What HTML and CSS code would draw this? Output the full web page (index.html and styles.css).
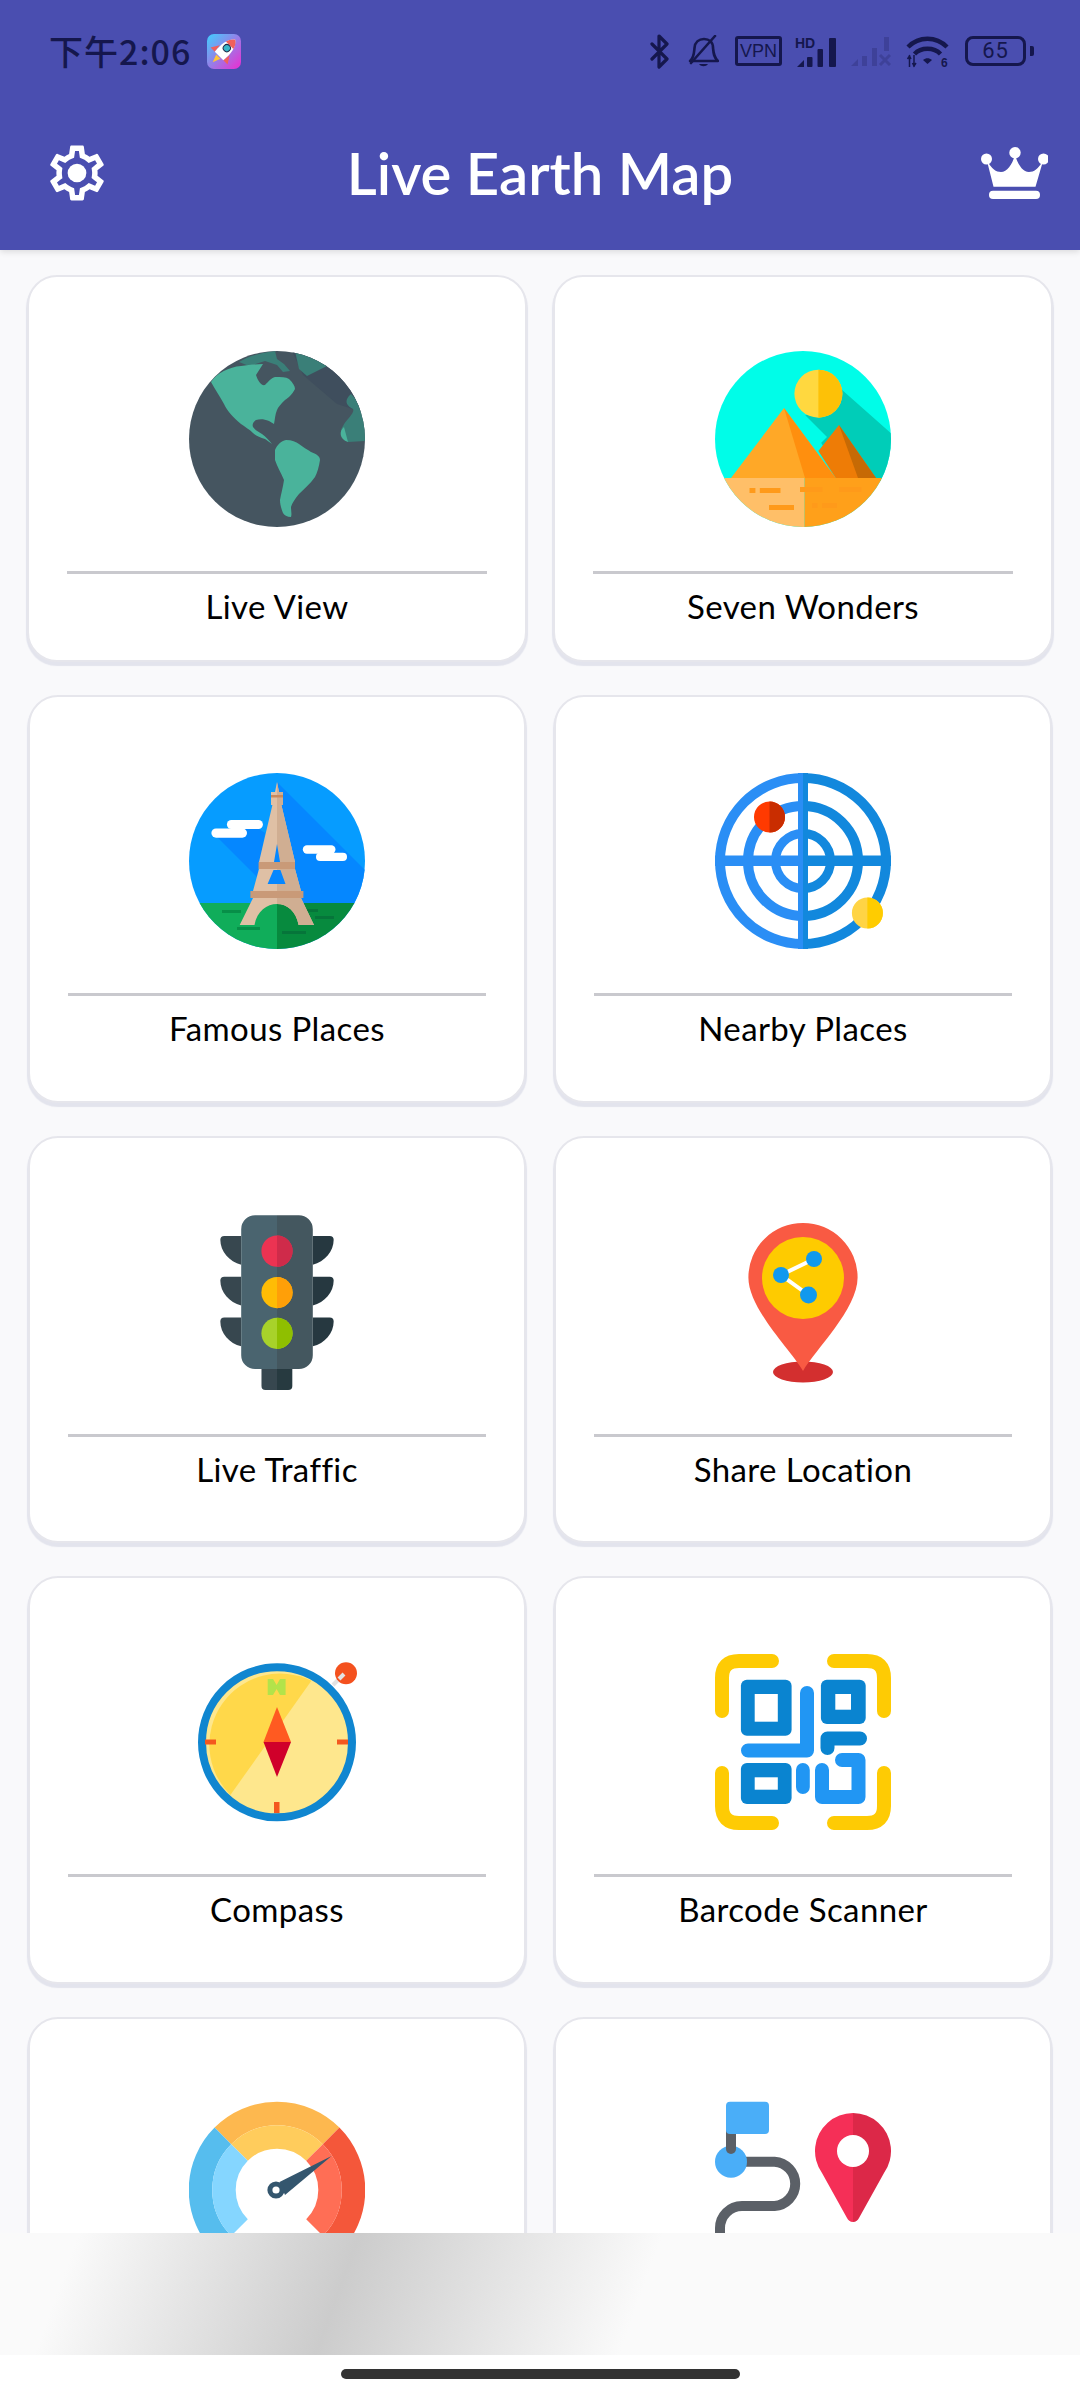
FILE: index.html
```html
<!DOCTYPE html>
<html lang="en">
<head>
  <meta charset="UTF-8">
  <title>Live Earth Map</title>
  <link rel="stylesheet" href="styles.css">
</head>
<body>

  <header class="app-header">
    <div class="status-bar">
      <div class="status-left">
        <span class="status-time">下午2:06</span>
        <svg class="rocket-icon" viewBox="0 0 34 35">
          <defs>
            <linearGradient id="rocketBg" x1="0" y1="0" x2="1" y2="1">
              <stop offset="0" stop-color="#3fd0ff"/>
              <stop offset="1" stop-color="#ee2bd0"/>
            </linearGradient>
          </defs>
          <rect width="34" height="35" rx="7" fill="url(#rocketBg)"/>
          <g transform="rotate(45 17 17)">
            <path d="M10 16 L5 24 H11 Z M24 16 L29 24 H23 Z" fill="#f0605c"/>
            <path d="M17 1 C23 6 24 14 23 24 H11 C10 14 11 6 17 1Z" fill="#fff"/>
            <path d="M17 1 C20 3 21.500 6 22.300 9 H11.700 C12.500 6 14 3 17 1Z" fill="#f0605c"/>
            <circle cx="17" cy="13" r="3.600" fill="#38b6c8" stroke="#1e2a4a" stroke-width="1"/>
            <path d="M14 25 H20 L17 33 Z" fill="#ffc53a"/>
          </g>
        </svg>
      </div>
      <div class="status-right">
        <svg class="ic-bt" viewBox="0 0 21 35">
          <path d="M3 10 L18 25 L10 33 V2 L18 10 L3 25" fill="none" stroke="#15174d" stroke-width="3.200" stroke-linejoin="round" stroke-linecap="round"/>
        </svg>
        <svg class="ic-bell" viewBox="0 0 31 32">
          <path d="M2 26 C6 23 6 18 6.500 13 C7 7 11 4 16 4 C21 4 25 7 25 13 C25.500 18 26 23 30 26 Z" fill="none" stroke="#15174d" stroke-width="2.600" stroke-linejoin="round"/>
          <path d="M11 29 H20 C18 32 13 32 11 29Z" fill="#15174d"/>
          <path d="M3 28 L27 1" stroke="#15174d" stroke-width="2.600" stroke-linecap="round"/>
        </svg>
        <span class="ic-vpn">VPN</span>
        <svg class="ic-signal" viewBox="0 0 42 31">
          <text class="ic-hd" x="0" y="12">HD</text>
          <path d="M2 31 L9 24 V31Z" fill="#15174d"/>
          <rect x="12" y="21" width="5.500" height="10" rx="1" fill="#15174d"/>
          <rect x="22.500" y="13" width="5.500" height="18" rx="1" fill="#15174d"/>
          <rect x="34" y="2" width="7" height="29" rx="1" fill="#15174d"/>
        </svg>
        <svg class="ic-signal-off" viewBox="0 0 41 29">
          <path d="M1 29 L8 22 V29Z M12 19 H17 V29 H12Z M22 11 H27 V29 H22Z M34 0 H39 V14 H34Z" fill="#15174d"/>
          <path d="M30 18 L40 28 M40 18 L30 28" stroke="#15174d" stroke-width="3"/>
        </svg>
        <svg class="ic-wifi" viewBox="0 0 43 34">
          <path d="M2 13 C13 2 30 2 41 13" fill="none" stroke="#15174d" stroke-width="4.400"/>
          <path d="M8.500 20 C15 13 28 13 34.500 20" fill="none" stroke="#15174d" stroke-width="4.400"/>
          <path d="M17 26 C20 23.500 23 23.500 26 26 L21.500 30Z" fill="#15174d"/>
          <path d="M3.500 21 V33 M8 21 V33 M1.500 25 L3.500 22 L5 25 M6.500 29 L8 32 L10 29" fill="none" stroke="#15174d" stroke-width="1.500"/>
          <text class="ic-six" x="35" y="33">6</text>
        </svg>
        <div class="battery"><span>65</span></div>
      </div>
    </div>
    <div class="toolbar">
      <svg class="ic-gear" viewBox="0 0 24 24">
        <path fill="#fff" d="M19.430 12.980c.04-.32.07-.64.07-.98 0-.34-.03-.66-.07-.98l2.110-1.650c.19-.15.24-.42.12-.64l-2-3.460c-.09-.16-.26-.25-.44-.25-.06 0-.12.01-.17.03l-2.490 1c-.52-.4-1.080-.73-1.690-.98l-.38-2.650C14.460 2.180 14.250 2 14 2h-4c-.25 0-.46.18-.49.42l-.38 2.650c-.61.25-1.170.59-1.690.98l-2.490-1c-.06-.02-.12-.03-.18-.03-.17 0-.34.09-.43.25l-2 3.460c-.13.22-.07.49.12.64l2.110 1.650c-.04.32-.07.65-.07.98 0 .33.03.66.07.98l-2.110 1.650c-.19.15-.24.42-.12.64l2 3.460c.09.16.26.25.44.25.06 0 .12-.01.17-.03l2.490-1c.52.4 1.080.73 1.690.98l.38 2.650c.03.24.24.42.49.42h4c.25 0 .46-.18.49-.42l.38-2.650c.61-.25 1.170-.59 1.690-.98l2.490 1c.06.02.12.03.18.03.17 0 .34-.09.43-.25l2-3.460c.12-.22.07-.49-.12-.64l-2.110-1.650zm-1.980-1.710c.04.31.05.52.05.73 0 .21-.02.43-.05.73l-.14 1.130.89.7 1.080.84-.7 1.210-1.270-.51-1.040-.42-.9.68c-.43.32-.84.56-1.250.73l-1.060.43-.16 1.130-.2 1.350h-1.400l-.19-1.350-.16-1.130-1.060-.43c-.43-.18-.83-.41-1.230-.71l-.91-.7-1.060.43-1.270.51-.7-1.210 1.080-.84.89-.7-.14-1.130c-.03-.31-.05-.54-.05-.74s.02-.43.05-.73l.14-1.130-.89-.7-1.080-.84.7-1.210 1.270.51 1.040.42.9-.68c.43-.32.84-.56 1.250-.73l1.060-.43.16-1.130.2-1.350h1.390l.19 1.350.16 1.130 1.060.43c.43.18.83.41 1.230.71l.91.7 1.060-.43 1.270-.51.7 1.210-1.070.85-.89.7.14 1.130z"/>
        <circle cx="12" cy="12" r="3.400" fill="#fff"/>
      </svg>
      <h1 class="app-title">Live Earth Map</h1>
      <svg class="ic-crown" viewBox="0 0 68 52">
        <circle cx="6.500" cy="12" r="5.500" fill="#fff"/>
        <circle cx="35" cy="5.700" r="5.700" fill="#fff"/>
        <circle cx="63.500" cy="12" r="5.500" fill="#fff"/>
        <path d="M7 14 L13.500 39.700 H55.500 L63 14 C58 22 54 25 49 25 C43 25 38 18 35 8 C32 18 27 25 21 25 C16 25 12 22 7 14Z" fill="#fff"/>
        <rect x="9" y="43.700" width="51" height="8.300" rx="4" fill="#fff"/>
      </svg>
    </div>
  </header>

  <main class="menu-area">
    <div class="menu-grid">

      <div class="card card-wide">
        <svg class="card-icon" viewBox="0 0 176 176">
          <defs><clipPath id="earthClip"><circle cx="88" cy="88" r="88"/></clipPath></defs>
          <g clip-path="url(#earthClip)">
            <rect width="176" height="176" fill="#455560"/>
            <path d="M103 0 L114 24 L148 53 L176 62 V0Z" fill="#3f4e5d"/>
            <path d="M176 100 C170 130 160 150 140 170 L176 176Z" fill="#3f4e5a"/>
            <path d="M50 11 C58 6 66 3 86 0 L88 8 L95 13 L101 20 L94 21 L88 14 L76 10 L60 15 Z" fill="#3a7f78"/>
            <path d="M106 0 L140 14 L118 25 L110 18Z" fill="#3a7f78"/>
            <path d="M162 43 L178 60 V90 L159 91 C153 88 150 80 154 75 C158 68 166 62 164 58 C158 55 154 50 162 43Z" fill="#3a7f78"/>
            <path d="M155 76 C150 80 150 88 159 91 Z" fill="#4ab39b"/>
            <path d="M22 31 C28 22 40 16 52 15 C60 14 68 13 74 13 L67 24 C69 30 72 35 76 34 C79 31 82 27 86 26 C92 26 97 26 100 28 C104 32 106 35 106 38 C103 44 99 47 96 49 C92 53 89 56 88 59 C86 64 86 68 85 73 L80 70 C75 68 71 68 67 69 C64 71 63 74 64 76 C67 80 70 81 73 83 C77 86 80 89 83 93 C80 91 78 89 76 88 C71 86 67 85 64 82 C60 78 56 76 52 73 C44 66 38 60 35 53 C31 46 26 38 22 31Z" fill="#4ab39b"/>
            <path d="M86 99 C88 94 92 90 97 89 C103 89 107 91 110 93 C114 96 119 99 122 101 C127 103 131 105 131 109 C130 116 128 122 126 126 C121 133 115 138 110 143 C106 148 103 152 102 156 C102 160 103 163 102 166 C98 166 95 164 94 162 C92 157 91 153 91 149 C92 143 94 136 95 129 C92 122 88 115 86 109Z" fill="#4ab39b"/>
          </g>
        </svg>
        <div class="card-line"></div>
        <div class="card-label">Live View</div>
      </div>

      <div class="card card-wide">
        <svg class="card-icon" viewBox="0 0 176 176">
          <defs><clipPath id="pyrClip"><circle cx="88" cy="88" r="88"/></clipPath></defs>
          <g clip-path="url(#pyrClip)">
            <rect width="176" height="176" fill="#00fde8"/>
            <path d="M126 38 L178 84 V130 H140 L108 95 L90 64 L110 62Z" fill="#00cdb8"/>
            <path d="M88 62 L112 86 L102 96 L76 68Z" fill="#00fde8"/>
            <path d="M69 57 L16 127 H120.700Z" fill="#ffa827"/>
            <path d="M69 57 L90 127 H120.700Z" fill="#ff8f0e"/>
            <path d="M124 74 L103.400 100 L120.700 127 H161Z" fill="#ee7c06"/>
            <path d="M124 74 L143 127 H161Z" fill="#c66a05"/>
            <rect y="127" width="89.600" height="49" fill="#ffbf68"/>
            <rect x="89.600" y="127" width="87" height="49" fill="#ffa01a"/>
            <path d="M34.500 137 H40.400 V142 H34.500Z M44.800 137 H65.500 V142 H44.800Z M85 136 H107.600 V141 H85Z M124 136 H146.500 V141 H124Z M54 154 H79 V159 H54Z M97 152 H102.400 V157 H97Z M107 152 H122 V157 H107Z" fill="#ff9a1a"/>
          </g>
          <circle cx="103.400" cy="42.700" r="24" fill="#ffd83f"/>
          <path d="M103.400 18.700 a24 24 0 0 1 0 48z" fill="#fdc107"/>
        </svg>
        <div class="card-line"></div>
        <div class="card-label">Seven Wonders</div>
      </div>

      <div class="card">
        <svg class="card-icon" viewBox="0 0 176 176">
          <defs><clipPath id="eiffelClip"><circle cx="88" cy="88" r="88"/></clipPath></defs>
          <g clip-path="url(#eiffelClip)">
            <rect width="176" height="176" fill="#069cff"/>
            <path d="M88 9 L176 97 V131 H88Z" fill="#0587ff"/>
            <path d="M28 64 L68 104 L76 60 L58 48Z" fill="#0587ff"/>
            <rect y="130" width="88" height="46" fill="#10ad5a"/>
            <rect x="88" y="130" width="88" height="46" fill="#078a3e"/>
            <path d="M33 137 H52 V140 H33Z M48 154 H71 V157 H48Z" fill="#078f48"/>
            <path d="M93 158 H117 V161 H93Z M126 143 H145 V146 H126Z M117 136 H129 V139 H117Z" fill="#06753a"/>
          </g>
          <rect x="37.900" y="47" width="36" height="9" rx="4.500" fill="#fff"/>
          <rect x="22.400" y="55.500" width="35.600" height="9.200" rx="4.600" fill="#fff"/>
          <rect x="113.800" y="72.300" width="32.700" height="8.500" rx="4.200" fill="#fff"/>
          <rect x="127" y="79.700" width="31" height="8.300" rx="4.100" fill="#fff"/>
          <path d="M88 9 L90 19 H94 V32 H92.400 L106 89 V96 L112 118 V125 L125 152 H109.600 C107 138 98 131 88 131 C78 131 68 138 65.500 152 H50.700 L64 125 V118 L70 96 V89 L83.400 32 H82 V19 H86Z" fill="#dfc0a5"/>
          <path d="M88 9 L90 19 H94 V32 H92.400 L106 89 V96 L112 118 V125 L125 152 H109.600 C107 138 98 131 88 131Z" fill="#d0ae92"/>
          <path d="M88 71 L85 89 H91Z M84.500 97 H91.400 L96.500 111 H78.600Z" fill="#0587ff"/>
          <rect x="69.600" y="89" width="36.400" height="7" fill="#c99a78"/>
          <rect x="61.400" y="118" width="53" height="7" fill="#c99a78"/>
          <rect x="82" y="22" width="12" height="2.500" fill="#c9895c"/>
        </svg>
        <div class="card-line"></div>
        <div class="card-label">Famous Places</div>
      </div>

      <div class="card">
        <svg class="card-icon" viewBox="0 0 176 176">
          <defs>
            <linearGradient id="radarSplit" gradientUnits="userSpaceOnUse" x1="0" y1="0" x2="176" y2="0">
              <stop offset="0.500" stop-color="#2a8ef5"/>
              <stop offset="0.500" stop-color="#1288dd"/>
            </linearGradient>
          </defs>
          <g fill="none" stroke="url(#radarSplit)">
            <circle cx="88" cy="88" r="83" stroke-width="10"/>
            <circle cx="88" cy="88" r="55" stroke-width="10"/>
            <circle cx="88" cy="88" r="27.500" stroke-width="9"/>
          </g>
          <rect x="83" y="0" width="5" height="176" fill="#2a8ef5"/>
          <rect x="88" y="0" width="5" height="176" fill="#1288dd"/>
          <rect x="0" y="82.500" width="88" height="10.500" fill="#2a8ef5"/>
          <rect x="88" y="82.500" width="88" height="10.500" fill="#1288dd"/>
          <circle cx="54.500" cy="44" r="15.500" fill="#ff3a00"/>
          <path d="M54.500 28.500 a15.500 15.500 0 0 1 0 31z" fill="#c92d00"/>
          <circle cx="152.400" cy="140" r="15.500" fill="#ffd445"/>
          <path d="M152.400 124.500 a15.500 15.500 0 0 1 0 31z" fill="#ffcc00"/>
        </svg>
        <div class="card-line"></div>
        <div class="card-label">Nearby Places</div>
      </div>

      <div class="card">
        <svg class="card-icon" viewBox="0 0 176 177">
          <path d="M52 22 H35 a4 4 0 0 0-4 4 C31 38 40 48 52 51Z M52 63 H35 a4 4 0 0 0-4 4 C31 79 40 89 52 92Z M52 104 H35 a4 4 0 0 0-4 4 C31 120 40 130 52 133Z" fill="#37474f"/>
          <path d="M124 22 H141 a4 4 0 0 1 4 4 C145 38 136 48 124 51Z M124 63 H141 a4 4 0 0 1 4 4 C145 79 136 89 124 92Z M124 104 H141 a4 4 0 0 1 4 4 C145 120 136 130 124 133Z" fill="#263840"/>
          <path d="M72.400 150 H88 V177 H76.400 a4 4 0 0 1-4-4Z" fill="#37474f"/>
          <path d="M88 150 H103.400 V173 a4 4 0 0 1-4 4 H88Z" fill="#273a40"/>
          <path d="M88 1.300 H66 a14 14 0 0 0-14 14 V142 a14 14 0 0 0 14 14 H88Z" fill="#4a646f"/>
          <path d="M88 1.300 H110 a14 14 0 0 1 14 14 V142 a14 14 0 0 1-14 14 H88Z" fill="#44575f"/>
          <circle cx="88" cy="37.300" r="15.700" fill="#ec3352"/>
          <path d="M88 21.600 a15.700 15.700 0 0 1 0 31.400z" fill="#cf2b4a"/>
          <circle cx="88" cy="79" r="15.700" fill="#ffbc05"/>
          <path d="M88 63.300 a15.700 15.700 0 0 1 0 31.400z" fill="#ff9f08"/>
          <circle cx="88" cy="120" r="15.700" fill="#a8d22a"/>
          <path d="M88 104.300 a15.700 15.700 0 0 1 0 31.400z" fill="#8fbf00"/>
        </svg>
        <div class="card-line"></div>
        <div class="card-label">Live Traffic</div>
      </div>

      <div class="card">
        <svg class="card-icon" viewBox="0 0 176 176">
          <ellipse cx="88" cy="158" rx="30" ry="10.500" fill="#d32f2f"/>
          <path d="M88 157 C76 136 33.400 95 33.400 63.500 A54.600 54.600 0 0 1 142.600 63.500 C142.600 95 100 136 88 157Z" fill="#f95a43"/>
          <circle cx="88" cy="64" r="41" fill="#fecb00"/>
          <path d="M99 45 L66 61 L93.500 81" fill="none" stroke="#fff" stroke-width="4"/>
          <circle cx="66" cy="61" r="8" fill="#1199ee"/>
          <circle cx="99" cy="45" r="8" fill="#1199ee"/>
          <circle cx="93.500" cy="81" r="8.500" fill="#1199ee"/>
        </svg>
        <div class="card-line"></div>
        <div class="card-label">Share Location</div>
      </div>

      <div class="card">
        <svg class="card-icon" viewBox="0 0 176 176">
          <path d="M144 31 L155 20" stroke="#e3e3e3" stroke-width="4"/>
          <circle cx="157" cy="19.300" r="11" fill="#f4511e"/>
          <path d="M150 25 L155 20" stroke="#e3e3e3" stroke-width="4"/>
          <circle cx="88" cy="88.300" r="73" fill="#fee78d"/>
          <path d="M122.400 26.700 A71 71 0 0 0 41.400 141 Z" fill="#ffd84a"/>
          <circle cx="88" cy="88.300" r="75" fill="none" stroke="#1086d0" stroke-width="8"/>
          <rect x="78.700" y="25" width="17.900" height="16" fill="#b3e34a"/>
          <path d="M84 25 L87.600 31 L91 25Z M84 41 L87.600 35 L91 41Z" fill="#ffd84a"/>
          <path d="M16 85.500 H27 V90.500 H16Z M148 85.500 H159 V90.500 H148Z M85 148 H90.500 V159 H85Z" fill="#f4581f"/>
          <path d="M88 53 L74.500 88 H102Z" fill="#ff5a21"/>
          <path d="M88 123 L74.500 88 H102Z" fill="#d0002a"/>
        </svg>
        <div class="card-line"></div>
        <div class="card-label">Compass</div>
      </div>

      <div class="card">
        <svg class="card-icon" viewBox="0 0 176 176">
          <g fill="none" stroke="#fecb04" stroke-width="14" stroke-linecap="round">
            <path d="M7 57 V24 Q7 7 24 7 H57"/>
            <path d="M169 57 V24 Q169 7 152 7 H119"/>
            <path d="M7 119 V152 Q7 169 24 169 H57"/>
            <path d="M169 119 V152 Q169 169 152 169 H119"/>
          </g>
          <rect x="25.900" y="25.700" width="50.700" height="56" rx="6" fill="#0a84d0"/>
          <rect x="39.700" y="40" width="23.100" height="27.700" fill="#fff"/>
          <rect x="105.900" y="25.700" width="44.800" height="44.300" rx="6" fill="#0a84d0"/>
          <rect x="120.300" y="40" width="15.700" height="15.700" fill="#fff"/>
          <rect x="25.900" y="109" width="50.700" height="41" rx="6" fill="#0a84d0"/>
          <rect x="39.700" y="123.300" width="23.100" height="12.400" fill="#fff"/>
          <g fill="none" stroke-width="14" stroke-linecap="round" stroke-linejoin="round">
            <path d="M92 39 V96.500 H33" stroke="#2196f3"/>
            <path d="M112.500 94 V84.500 H145" stroke="#0a84d0"/>
            <path d="M107 116 V143 H143.500 V106 H127" stroke="#2196f3"/>
          </g>
          <rect x="81" y="109" width="13.800" height="31" rx="6.900" fill="#2196f3"/>
        </svg>
        <div class="card-line"></div>
        <div class="card-label">Barcode Scanner</div>
      </div>

      <div class="card">
        <svg class="card-icon" viewBox="0 0 176 176">
          <g fill="none" stroke-width="23.500">
            <path d="M33.900 40.900 A76.500 76.500 0 0 1 142.100 40.900" stroke="#fdb84f"/>
            <path d="M33.900 149.100 A76.500 76.500 0 0 1 33.900 40.900" stroke="#56bdee"/>
            <path d="M142.100 40.900 A76.500 76.500 0 0 1 142.100 149.100" stroke="#f4573a"/>
            <path d="M50.500 57.500 A53 53 0 0 1 125.500 57.500" stroke="#ffcc5c"/>
            <path d="M50.500 132.500 A53 53 0 0 1 50.500 57.500" stroke="#85d6ff"/>
            <path d="M125.500 57.500 A53 53 0 0 1 125.500 132.500" stroke="#ff6e55"/>
          </g>
          <path d="M142.600 61 L90.500 87 L96 100Z" fill="#34566e"/>
          <circle cx="87" cy="95" r="8.600" fill="#34566e"/>
          <circle cx="87" cy="95" r="3.600" fill="#fff"/>
        </svg>
      </div>

      <div class="card">
        <svg class="card-icon" viewBox="0 0 176 176">
          <defs>
            <linearGradient id="pinSplit" x1="0" y1="0" x2="1" y2="0">
              <stop offset="0.500" stop-color="#f52f57"/>
              <stop offset="0.500" stop-color="#dc2848"/>
            </linearGradient>
          </defs>
          <path d="M30 66.700 H59.500 A22.200 22.200 0 0 1 59.500 111 H27 A22 22 0 0 0 5 133 V176" fill="none" stroke="#5b6067" stroke-width="10"/>
          <circle cx="16" cy="66.700" r="16" fill="#4aaef8"/>
          <path d="M16 35 V54" stroke="#5b6067" stroke-width="10" stroke-linecap="round"/>
          <rect x="11" y="6.700" width="43" height="32.300" rx="4" fill="#4aaef8"/>
          <path d="M138 127 c-3 0-5-2-6-4 L107 78 A38 38 0 1 1 169 78 L144 123 c-1 2-3 4-6 4Z" fill="url(#pinSplit)"/>
          <circle cx="138" cy="56" r="16" fill="#fff"/>
        </svg>
      </div>

    </div>
  </main>

  <div class="ad-banner"></div>

  <div class="nav-area">
    <div class="home-bar"></div>
  </div>

</body>
</html>
```

FILE: styles.css
```css
html, body {
  height: 2400px;
  margin: 0;
  overflow: hidden;
}

body {
  display: flex;
  flex-direction: column;
  font-family: 'Lato', 'Noto Sans', sans-serif;
  background-color: #f9f9fb;
  color: #000;
}

.app-header {
  flex: 0 0 250px;
  background-color: #4a4eb0;
  box-shadow: 0 2px 6px rgba(0, 0, 0, 0.12);
  position: relative;
  z-index: 1;
}

.status-bar {
  display: flex;
  justify-content: space-between;
  align-items: center;
  height: 36px;
  padding: 33px 47px 0 49px;
  color: #15174d;
}

.status-left {
  display: flex;
  align-items: center;
  gap: 16px;
}

.status-time {
  font-family: 'Noto Sans CJK SC', sans-serif;
  font-weight: 500;
  font-size: 34px;
  line-height: 36px;
  letter-spacing: 1px;
}

.rocket-icon {
  width: 34px;
  height: 35px;
}

.status-right {
  display: flex;
  align-items: center;
}

.ic-bt {
  width: 21px;
  height: 35px;
  margin-right: 18px;
}

.ic-bell {
  width: 31px;
  height: 32px;
  margin-right: 16px;
}

.ic-vpn {
  box-sizing: border-box;
  width: 47px;
  height: 30px;
  margin-right: 13px;
  border: 3px solid #15174d;
  border-radius: 3px;
  font-family: 'Liberation Sans', sans-serif;
  font-size: 18px;
  line-height: 24px;
  text-align: center;
}

.ic-signal {
  width: 42px;
  height: 31px;
  margin-right: 13px;
}

.ic-hd {
  font-family: 'Liberation Sans', sans-serif;
  font-weight: 700;
  font-size: 14px;
  fill: #15174d;
}

.ic-signal-off {
  width: 41px;
  height: 29px;
  margin-right: 15px;
  opacity: 0.22;
}

.ic-wifi {
  width: 43px;
  height: 34px;
  margin-right: 16px;
}

.ic-six {
  font-family: 'Liberation Sans', sans-serif;
  font-weight: 700;
  font-size: 12px;
  fill: #15174d;
}

.battery {
  position: relative;
  box-sizing: border-box;
  width: 61px;
  height: 30px;
  margin-right: 7px;
  border: 3.5px solid #15174d;
  border-radius: 8px;
  font-family: 'Roboto', sans-serif;
  font-size: 22px;
  line-height: 23px;
  text-align: center;
  letter-spacing: 1px;
}

.battery::after {
  content: "";
  position: absolute;
  right: -11px;
  top: 7px;
  width: 4px;
  height: 10px;
  border-radius: 0 2px 2px 0;
  background-color: #15174d;
}

.toolbar {
  display: grid;
  grid-template-columns: 1fr auto 1fr;
  align-items: center;
  height: 72px;
  margin-top: 68px;
  padding: 0 32px;
}

.ic-gear {
  width: 66px;
  height: 66px;
  margin-left: 12px;
}

.app-title {
  margin: 0;
  color: #fff;
  font-size: 58px;
  font-weight: 600;
  line-height: 72px;
}

.ic-crown {
  justify-self: end;
  width: 68px;
  height: 52px;
}

.menu-area {
  flex: 1;
  overflow: hidden;
}

.menu-grid {
  display: grid;
  grid-template-columns: 498px 498px;
  grid-template-rows: 387px repeat(4, 407.67px);
  gap: 33px 28px;
  padding: 25px 28px 0;
}

.card {
  display: flex;
  flex-direction: column;
  align-items: stretch;
  box-sizing: border-box;
  padding: 76px 38px 0;
  background-color: #fff;
  border: 2px solid #e6e6ec;
  border-radius: 30px;
  box-shadow: 0 3px 1px 1px #e3e4ed;
}

.card-wide {
  margin: 0 -1px;
  padding-top: 74px;
}

.card-icon {
  align-self: center;
  flex: none;
  width: 176px;
  height: 176px;
}

.card-line {
  flex: none;
  height: 3px;
  margin-top: 44px;
  background-color: #c9c9ce;
}

.card-label {
  margin-top: 12px;
  font-size: 33px;
  letter-spacing: 0.4px;
  line-height: 40px;
  text-align: center;
}

.ad-banner {
  flex: 0 0 122px;
  background: linear-gradient(110deg, #fafafa 7%, #cccccc 32%, #fafafa 59%);
}

.nav-area {
  display: flex;
  justify-content: center;
  flex: 0 0 45px;
  background-color: #fff;
}

.home-bar {
  width: 399px;
  height: 10px;
  margin-top: 14px;
  border-radius: 5px;
  background-color: #333;
}
```
